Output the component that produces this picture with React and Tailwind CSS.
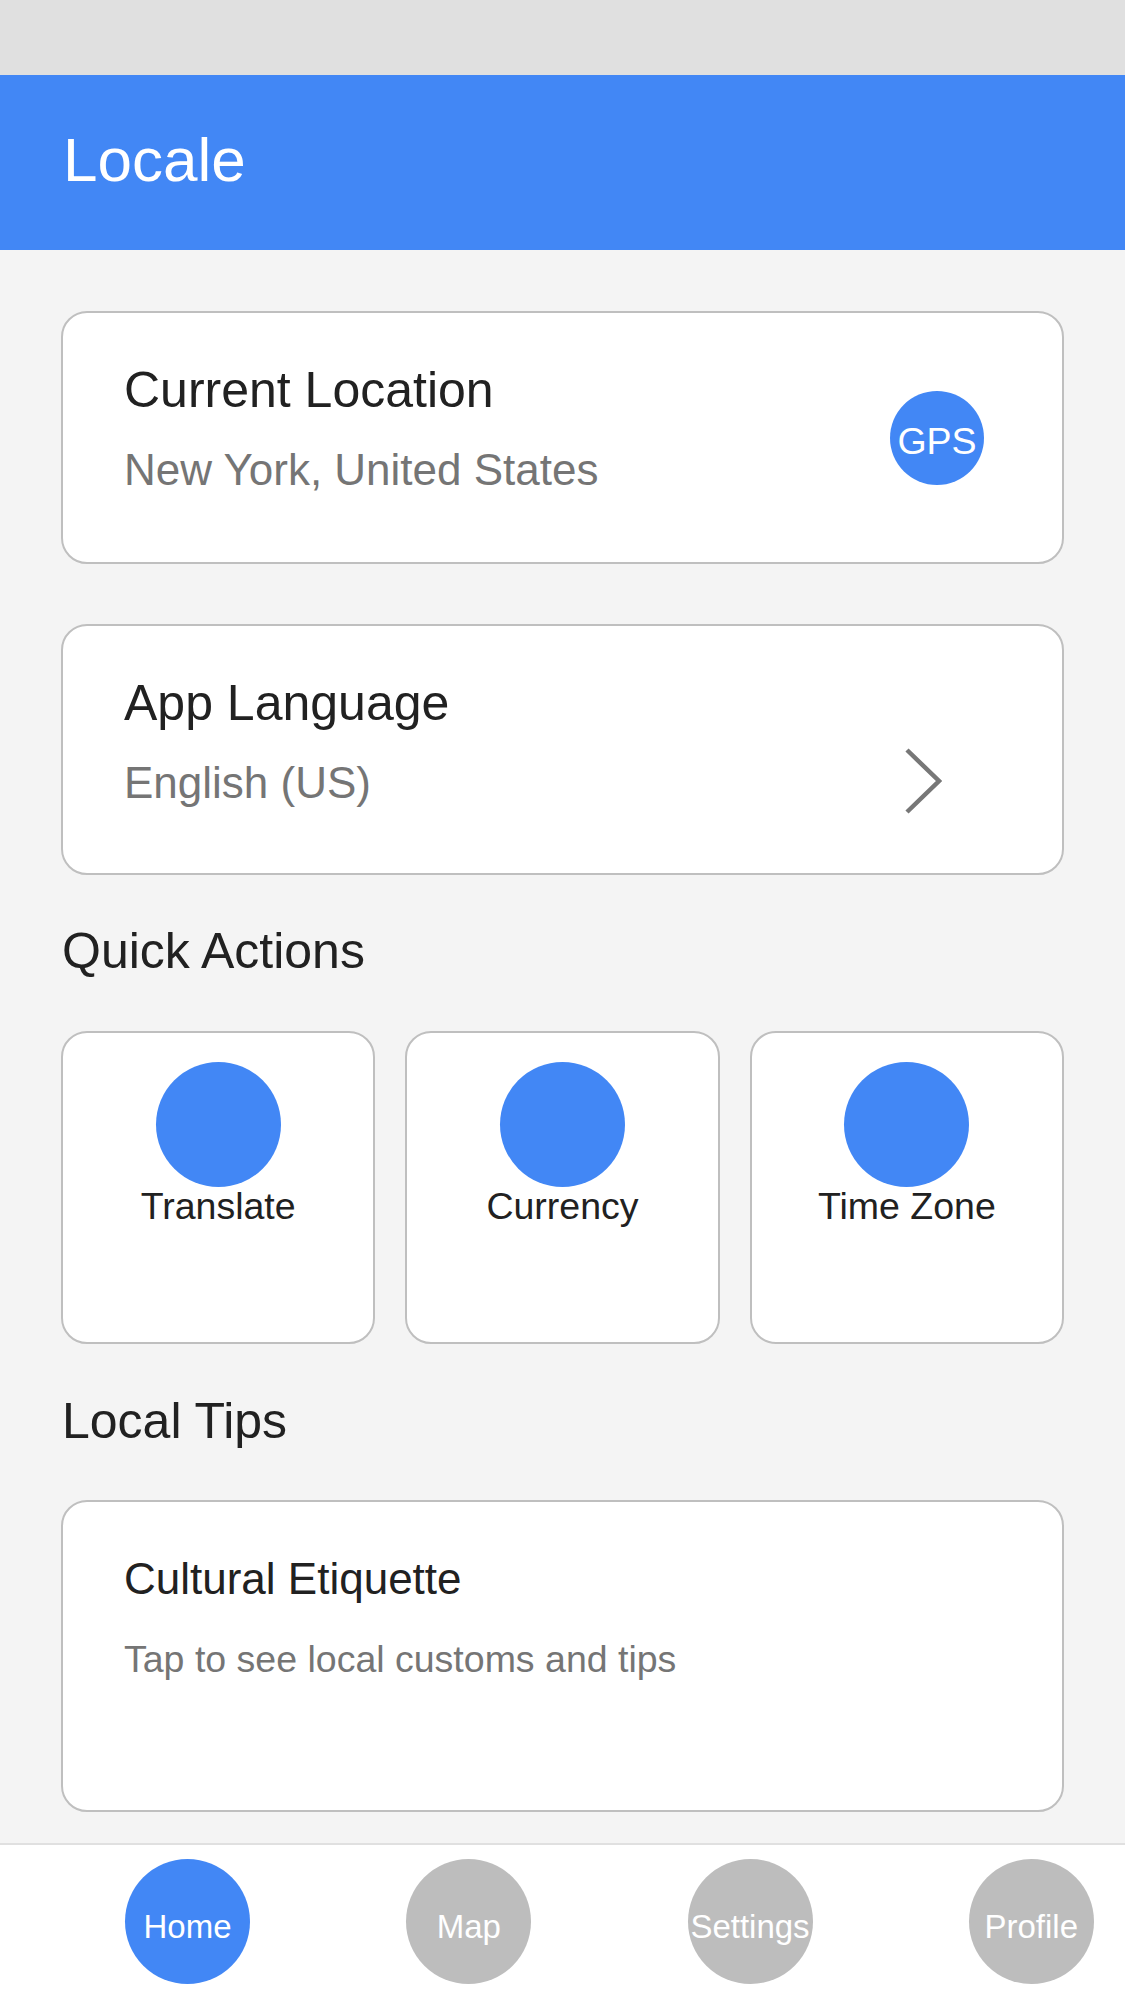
import React from "react";

const font = { fontFamily: '"Liberation Sans", Arial, sans-serif' };

function GpsBadge() {
  return (
    <div className="mt-[31px] flex h-[94px] w-[94px] shrink-0 items-center justify-center rounded-full bg-[#4287f5] pt-[5px] text-[37.5px] leading-[38px] text-white">
      GPS
    </div>
  );
}

function Chevron() {
  return (
    <svg
      className="mt-[75px] shrink-0"
      width="38"
      height="66"
      viewBox="0 0 38 66"
      fill="none"
    >
      <polyline
        points="3,2 35,33 3,64"
        stroke="#777777"
        strokeWidth="4.5"
        strokeLinecap="butt"
        strokeLinejoin="miter"
      />
    </svg>
  );
}

function ActionCard({ label }) {
  return (
    <div className="flex h-[313px] flex-col items-center rounded-[26px] border-2 border-[#bfbfbf] bg-white pt-[29px]">
      <div className="h-[125px] w-[125px] rounded-full bg-[#4287f5]" />
      <div className="text-[37.5px] leading-[38px] text-[#212121]">{label}</div>
    </div>
  );
}

function NavItem({ label, active }) {
  return (
    <div
      className={
        active
          ? "flex h-[125px] w-[125px] shrink-0 items-center justify-center rounded-full bg-[#4287f5] pt-[10px] text-[33px] text-white"
          : "flex h-[125px] w-[125px] shrink-0 items-center justify-center rounded-full bg-[#bdbdbd] pt-[10px] text-[33px] text-white"
      }
    >
      {label}
    </div>
  );
}

export default function App() {
  return (
    <div
      className="flex h-[2000px] w-[1125px] flex-col overflow-hidden bg-[#f4f4f4]"
      style={font}
    >
      <div className="h-[75px] shrink-0 bg-[#e0e0e0]" />
      <header className="h-[175px] shrink-0 bg-[#4287f5] pl-[63px] pt-[54px] text-[62px] leading-[62px] text-white">
        Locale
      </header>

      <main className="flex flex-1 flex-col overflow-hidden px-[61px] pt-[61px]">
        <div className="flex h-[253px] items-start justify-between rounded-[26px] border-2 border-[#bfbfbf] bg-white pl-[61px] pr-[78px] pt-[47px]">
          <div className="flex flex-col">
            <div className="text-[50px] leading-[60px] text-[#212121]">
              Current Location
            </div>
            <div className="mt-[24px] text-[44px] leading-[52px] text-[#757575]">
              New York, United States
            </div>
          </div>
          <GpsBadge />
        </div>

        <div className="mt-[60px] flex h-[251px] items-start justify-between rounded-[26px] border-2 border-[#bfbfbf] bg-white pl-[61px] pr-[120px] pt-[47px]">
          <div className="flex flex-col">
            <div className="text-[50px] leading-[60px] text-[#212121]">
              App Language
            </div>
            <div className="mt-[24px] text-[44px] leading-[52px] text-[#757575]">
              English (US)
            </div>
          </div>
          <Chevron />
        </div>

        <h2 className="mb-[50px] mt-[46px] pl-[1px] text-[50px] font-normal leading-[60px] text-[#212121]">
          Quick Actions
        </h2>

        <div className="grid grid-cols-3 gap-[30px]">
          <ActionCard label="Translate" />
          <ActionCard label="Currency" />
          <ActionCard label="Time Zone" />
        </div>

        <h2 className="mb-[49px] mt-[47px] pl-[1px] text-[50px] font-normal leading-[60px] text-[#212121]">
          Local Tips
        </h2>

        <div className="flex h-[312px] shrink-0 flex-col rounded-[26px] border-2 border-[#bfbfbf] bg-white pl-[61px] pt-[51px]">
          <div className="text-[44px] leading-[52px] text-[#212121]">
            Cultural Etiquette
          </div>
          <div className="mt-[31px] text-[37.5px] leading-[46px] text-[#757575]">
            Tap to see local customs and tips
          </div>
        </div>
      </main>

      <nav className="flex h-[157px] shrink-0 items-start gap-[156.25px] border-t-2 border-[#e0e0e0] bg-white pl-[125px] pt-[14px]">
        <NavItem label="Home" active />
        <NavItem label="Map" />
        <NavItem label="Settings" />
        <NavItem label="Profile" />
      </nav>
    </div>
  );
}
